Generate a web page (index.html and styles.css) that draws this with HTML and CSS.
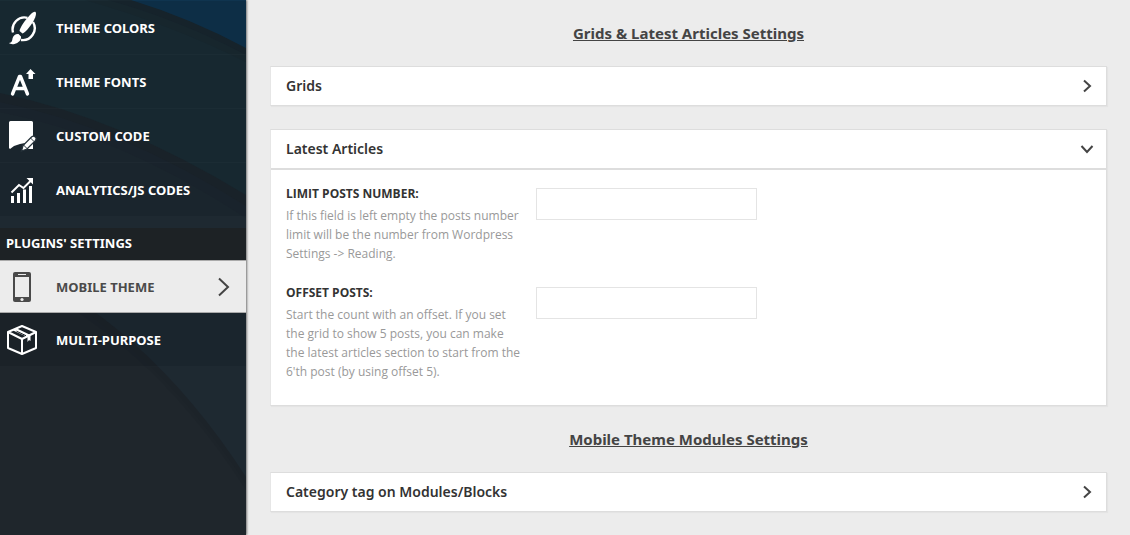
FILE: index.html
```
<!DOCTYPE html>
<html lang="en">
<head>
<meta charset="utf-8">
<title>Mobile Theme Settings</title>
<link rel="stylesheet" href="styles.css">
</head>
<body>
<div class="page">
  <nav class="sidebar">
    <svg class="backdrop" viewBox="0 0 246 535" preserveAspectRatio="none" aria-hidden="true">
      <rect width="246" height="535" fill="#1f262c"/>
      <path d="M0 270Q145 332 246 490V0H0Z" fill="#1d242a"/>
      <path d="M0 265Q145 327 246 484V0H0Z" fill="#1c2329"/>
      <path d="M0 258Q145 320 246 477V0H0Z" fill="#1e2931"/>
      <path d="M0 112Q120 135 246 218V0H0Z" fill="#1d2730"/>
      <path d="M0 102Q120 126 246 206V0H0Z" fill="#1c262d"/>
      <path d="M0 93Q120 118 246 195V0H0Z" fill="#1a2d35"/>
      <path d="M85 0Q170 24 246 62V0Z" fill="#1a2a32"/>
      <path d="M108 0Q180 20 246 55V0Z" fill="#19272f"/>
      <path d="M131 0Q190 18 246 48V0Z" fill="#0f344f"/>
    </svg>
    <ul class="menu">
      <li><a class="item" href="#colors">
        <svg class="icon" width="32" height="36" viewBox="0 0 32 36"><path d="M21.500 7.800A12 12 0 0 0 7 22.500M27 12A12 12 0 0 1 15 30" fill="none" stroke="#fff" stroke-width="2.400"/><path d="M29.500 2C30.500 3 30 6 28 10C25.500 15 20 22 16.500 23.500L13.500 21C14 17 20 9 24 5C26.500 2.500 28.500 1.300 29.500 2Z" fill="#fff"/><path d="M12.500 24L15 26.500C15.500 30 12.500 33 8.500 34C6 34.500 4 34 3 33C6 32.500 6 31 6.500 28.500C7 25.500 10 23.500 12.500 24Z" fill="#fff"/></svg>
        <span>THEME COLORS</span></a></li>
      <li><a class="item" href="#fonts">
        <svg class="icon" width="32" height="36" viewBox="0 0 32 36" fill="none"><path d="M6.500 30L13.500 12.500H14.500L21.500 30M9.500 24.500H18.500" stroke="#fff" stroke-width="3.400" stroke-linecap="round" stroke-linejoin="round"/><path d="M24.500 5L29.500 10H27V15H22.500V10H20Z" fill="#fff"/></svg>
        <span>THEME FONTS</span></a></li>
      <li><a class="item" href="#code">
        <svg class="icon" width="32" height="36" viewBox="0 0 32 36"><path d="M4.500 3H25.500Q27 3 27 4.500V31H22L19 25L14 26L8 28L4 31L3 30V4.500Q3 3 4.500 3Z" fill="#fff"/><path d="M15.500 33L17 27.500L25.500 19Q27.500 17.200 29.500 19.200Q31 21 29.300 22.800L21 31L15.500 33Z" fill="#fff" stroke="#26323a" stroke-width="1.300"/><path d="M17.500 27L21.500 31M24.500 20L28 23.500" stroke="#26323a"/></svg>
        <span>CUSTOM CODE</span></a></li>
      <li><a class="item" href="#analytics">
        <svg class="icon" width="32" height="36" viewBox="0 0 32 36" fill="none" stroke="#fff"><path d="M6.500 31V24M12.500 31V21M18.500 31V17.500M24.500 31V14" stroke-width="3"/><path d="M5.500 20.500L13 13L17.500 16L25 8.500" stroke-width="2"/><path d="M20.500 6H27V12.500Z" fill="#fff" stroke="none"/></svg>
        <span>ANALYTICS/JS CODES</span></a></li>
    </ul>
    <h2 class="group">PLUGINS' SETTINGS</h2>
    <ul class="menu">
      <li><a class="item active" href="#mobile" aria-current="page">
        <svg class="icon" width="32" height="36" viewBox="0 0 32 36"><rect x="7" y="3" width="18" height="30" rx="2" fill="#4a4a4a"/><path d="M9 8H23V28H9ZM12 5H20V6H12Z" fill="#ececec"/><circle cx="16" cy="30.500" r="1.600" fill="#ececec"/></svg>
        <span>MOBILE THEME</span>
        <svg class="arrow" width="12" height="20" viewBox="0 0 12 20" fill="none" stroke="#444" stroke-width="2"><path d="M1 1.500L10 10L1 18.500"/></svg></a></li>
      <li><a class="item" href="#multi">
        <svg class="icon" width="32" height="36" viewBox="0 0 32 36" fill="none" stroke="#fff" stroke-width="2" stroke-linejoin="round"><path d="M16 4L30 10V26L16 32L2 26V10ZM2 10L16 17L30 10M16 17V32"/><path d="M7 8.500L11 6.500L24.500 13V19L23 18L21.500 20V15Z" fill="#fff" stroke="none"/><path d="M10.500 9.200L20 13.700" stroke="#1b2228" stroke-width="1"/></svg>
        <span>MULTI-PURPOSE</span></a></li>
    </ul>
  </nav>
  <main class="content">
    <h1 class="heading">Grids &amp; Latest Articles Settings</h1>
    <section class="card"><button class="toggle" type="button" aria-expanded="false">Grids
      <svg width="14" height="14" viewBox="0 0 14 14"><path d="M4 1.500L10 7L4 12.500"/></svg></button></section>
    <section class="card">
      <button class="toggle" type="button" aria-expanded="true">Latest Articles
        <svg width="14" height="14" viewBox="0 0 14 14"><path d="M1.500 4L7 10L12.500 4"/></svg></button>
      <div class="panel">
        <div class="field">
          <div class="info"><label for="limit">LIMIT POSTS NUMBER:</label>
            <p>If this field is left empty the posts number limit will be the number from Wordpress Settings -&gt; Reading.</p></div>
          <input id="limit" type="text">
        </div>
        <div class="field">
          <div class="info"><label for="offset">OFFSET POSTS:</label>
            <p>Start the count with an offset. If you set the grid to show 5 posts, you can make the latest articles section to start from the 6'th post (by using offset 5).</p></div>
          <input id="offset" type="text">
        </div>
      </div>
    </section>
    <h1 class="heading">Mobile Theme Modules Settings</h1>
    <section class="card"><button class="toggle" type="button" aria-expanded="false">Category tag on Modules/Blocks
      <svg width="14" height="14" viewBox="0 0 14 14"><path d="M4 1.500L10 7L4 12.500"/></svg></button></section>
  </main>
</div>
</body>
</html>
```
FILE: styles.css
```
* { box-sizing: border-box; }
body { margin: 0; background: #ececec; color: #444; font-family: "Open Sans", sans-serif; }
.page { display: flex; min-height: 100vh; }
.sidebar { position: relative; flex: 0 0 246px; padding-top: 1px; background: #1f262c; box-shadow: 1px 0 2px rgba(0, 0, 0, .5); }
.backdrop { position: absolute; inset: 0; width: 100%; height: 100%; }
.menu { position: relative; margin: 0; padding: 0; list-style: none; }
.item { display: flex; align-items: center; height: 54px; padding: 0 16px 0 6px; background: rgba(10, 15, 20, .14); border-bottom: 1px solid rgba(255, 255, 255, .02); color: #fff; font: bold 13px/20px "Noto Sans", sans-serif; text-decoration: none; }
.icon { flex: none; margin-right: 18px; }
.item.active { height: 53px; background: #ececec; border-top: 1px solid #aaa; border-bottom: 1px solid #aaa; color: #4a4a4a; }
.arrow { margin-left: auto; }
.group { position: relative; margin: 11px 0 0; padding: 5px 6px 7px; background: #1d2225; color: #fff; font: bold 13px/20px "Noto Sans", sans-serif; }
.content { flex: 1; min-width: 0; padding: 0 23px 23px 24px; }
.heading { margin: 0; padding: 21px 0; color: #444; font: bold 15px/24px "Noto Sans", sans-serif; text-align: center; text-decoration: underline; }
.card { background: #fff; border: 1px solid #ddd; border-left-color: #e6e6e6; box-shadow: 1px 1px 1px #e4e4e4; }
.card + .card { margin-top: 23px; }
.toggle { display: flex; align-items: center; justify-content: space-between; width: 100%; height: 38px; padding: 0 12px 0 15px; background: none; border: 0; color: #333; font: 600 14px/20px "Noto Sans", sans-serif; }
.toggle svg { fill: none; stroke: #444; stroke-width: 2; }
.panel { display: grid; gap: 20px; padding: 14px 15px 24px; border-top: 2px solid #ddd; }
.field { display: flex; align-items: flex-start; }
.info { width: 250px; padding-right: 14px; color: #999; font-size: 12px; line-height: 19px; }
.info label { display: block; padding-bottom: 3px; color: #333; font: bold 12px/19px "Open Sans", sans-serif; }
.info p { margin: 0; }
.field input { width: 221px; height: 32px; margin-top: 4px; padding: 0 8px; border: 1px solid #e4e4e4; background: #fff; font: 12px "Open Sans", sans-serif; }
```
